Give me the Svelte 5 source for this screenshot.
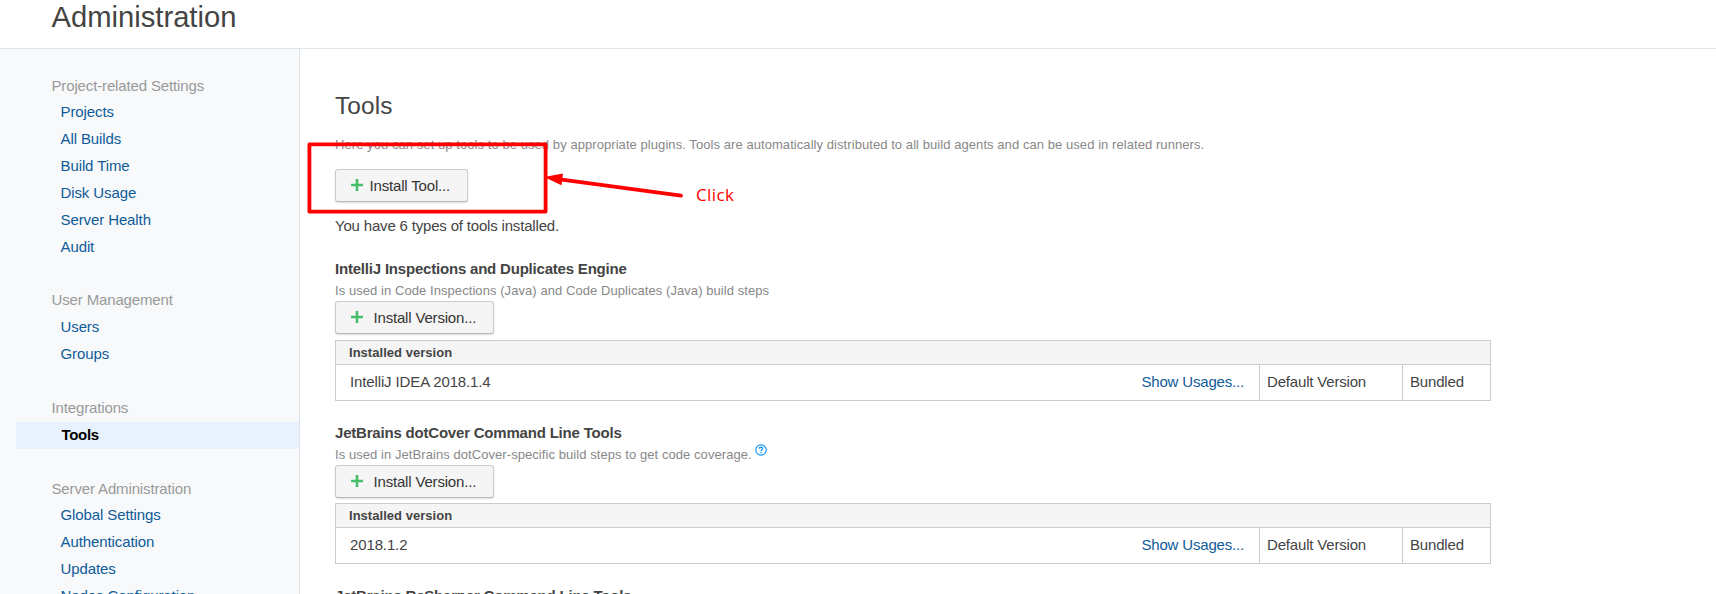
<script>
  const groups = [
    { title: 'Project-related Settings', items: ['Projects', 'All Builds', 'Build Time', 'Disk Usage', 'Server Health', 'Audit'] },
    { title: 'User Management', items: ['Users', 'Groups'] },
    { title: 'Integrations', items: ['Tools'] },
    { title: 'Server Administration', items: ['Global Settings', 'Authentication', 'Updates', 'Nodes Configuration'] }
  ];
  const tools = [
    { name: 'IntelliJ Inspections and Duplicates Engine', note: 'Is used in Code Inspections (Java) and Code Duplicates (Java) build steps', help: false, version: 'IntelliJ IDEA 2018.1.4' },
    { name: 'JetBrains dotCover Command Line Tools', note: 'Is used in JetBrains dotCover-specific build steps to get code coverage.', help: true, version: '2018.1.2' }
  ];
</script>

{#snippet plus()}
  <svg class="plus" width="12" height="12" viewBox="0 0 12 12"><path d="M6 0v12M0 6h12" stroke="#47bf68" stroke-width="2.6" /></svg>
{/snippet}

<div class="page">
  <header><h1>Administration</h1></header>
  <div class="body">
    <nav>
      {#each groups as g}
        <section>
          <div class="title">{g.title}</div>
          {#each g.items as item}
            <a class="item" class:selected={item === 'Tools'}>{item}</a>
          {/each}
        </section>
      {/each}
    </nav>
    <main>
      <h2>Tools</h2>
      <p class="note intro">Here you can set up tools to be used by appropriate plugins. Tools are automatically distributed to all build agents and can be used in related runners.</p>
      <button class="tool">{@render plus()}<span>Install Tool...</span></button>
      <p class="count">You have 6 types of tools installed.</p>
      {#each tools as t}
        <article class:second={t.help}>
          <h3>{t.name}</h3>
          <p class="note desc">{t.note}{#if t.help}<svg class="help" width="12" height="12" viewBox="0 0 12 12"><circle cx="6" cy="6" r="5.2" fill="none" stroke="#1a98ff" stroke-width="1.2" /><path d="M4.3 4.7C4.4 2.7 7.7 2.8 7.6 4.7C7.6 5.7 6 5.8 6 7.2M6 8v1.2" fill="none" stroke="#1a98ff" stroke-width="1.3" /></svg>{/if}</p>
          <button class="version">{@render plus()}<span>Install Version...</span></button>
          <div class="table">
            <div class="head">Installed version</div>
            <div class="row">
              <div class="name"><span>{t.version}</span><a>Show Usages...</a></div>
              <div class="def">Default Version</div>
              <div class="bun">Bundled</div>
            </div>
          </div>
        </article>
      {/each}
      <article><h3>JetBrains ReSharper Command Line Tools</h3></article>
    </main>
  </div>
  <svg class="mark" width="440" height="90" viewBox="300 135 440 90">
    <rect x="309.4" y="144.4" width="236.2" height="67.2" fill="none" stroke="#f00" stroke-width="3.8" stroke-linejoin="round" />
    <path d="M560 179.3L681 195.7" stroke="#f00" stroke-width="3.8" stroke-linecap="round" />
    <path d="M544 177L563 173.5L561.5 185.2Z" fill="#f00" />
  </svg>
  <span class="click">Click</span>
</div>

<style>
  :global(body) { overflow: hidden; background: #fff; }
  .page { position: relative; width: 1716px; height: 594px; overflow: hidden; display: flex; flex-direction: column; font: 15px/18px "Liberation Sans", Arial, sans-serif; color: #444; }
  h1, h2, h3, p { margin: 0; font-weight: 400; }
  header { height: 48px; flex: none; border-bottom: 1px solid #dfe5eb; padding-left: 51.5px; }
  h1 { font-size: 29.2px; line-height: 34px; }
  .body { display: flex; flex: 1; min-height: 0; }
  nav { width: 283px; flex: none; background: #f7f9fb; border-right: 1px solid #dfe5eb; padding: 23.5px 0 0 16px; letter-spacing: -.14px; }
  section { margin-bottom: 26.9px; }
  section:first-child { margin-bottom: 26.4px; }
  .title, .item { display: block; height: 26.88px; line-height: 26.88px; padding-left: 35.5px; color: #999; }
  .item { padding-left: 44.5px; color: #0f5b99; letter-spacing: -.1px; }
  section:nth-child(2) .title { height: 27.3px; }
  .item.selected { background: #e7f2fd; color: #000; font-weight: 700; padding-left: 45.5px; letter-spacing: -.3px; }
  main { padding: 41px 0 0 35px; width: 1156px; display: flex; flex-direction: column; align-items: flex-start; letter-spacing: -.18px; }
  main > * { flex: none; }
  h2 { font-size: 24.4px; line-height: 32px; letter-spacing: .15px; }
  .note { font-size: 13px; line-height: 18px; color: #888; white-space: nowrap; letter-spacing: .067px; }
  .intro { margin-top: 14px; }
  .desc { padding-top: 3px; height: 18px; }
  button { display: flex; align-items: center; box-sizing: border-box; height: 33px; padding: 0 0 0 15px; border: 1px solid #ccc; border-bottom-color: #b8b8b8; border-radius: 3px; background: #f5f5f5; box-shadow: 0 1px 2px #0002; font: inherit; letter-spacing: inherit; color: #333; white-space: nowrap; }
  .tool { width: 133px; margin-top: 15px; gap: 6.6px; }
  .version { width: 159px; margin-top: 1px; gap: 10.5px; }
  .plus { flex: none; margin-top: -2px; }
  button span { position: relative; top: .5px; }
  .count { margin-top: 15px; }
  article { margin-top: 22px; width: 100%; }
  .count + article { margin-top: 24px; }
  h3 { font-size: 15px; font-weight: 700; line-height: 20px; letter-spacing: -.2px; }
  .help { margin-left: 3px; position: relative; top: -3px; }
  .table { margin-top: 6px; border: 1px solid #ccc; }
  .second .table { margin-top: 5px; }
  .head { height: 23px; line-height: 23px; padding-left: 13px; font-size: 13px; font-weight: 700; background: #f5f5f5; border-bottom: 1px solid #ccc; letter-spacing: .03px; }
  .row { display: flex; height: 35px; line-height: 34px; }
  .name { flex: 1; display: flex; justify-content: space-between; padding: 0 15px 0 14px; }
  .name span { letter-spacing: -.13px; }
  .name a { color: #0f5b99; }
  .def { width: 135px; padding-left: 7px; border-left: 1px solid #ccc; }
  .bun { width: 80px; padding-left: 7px; border-left: 1px solid #ccc; }
  .mark { position: absolute; left: 300px; top: 135px; }
  .click { position: absolute; left: 696px; top: 182px; font: 17px/26px "Open Sans", sans-serif; letter-spacing: .4px; color: #f00; }
</style>
